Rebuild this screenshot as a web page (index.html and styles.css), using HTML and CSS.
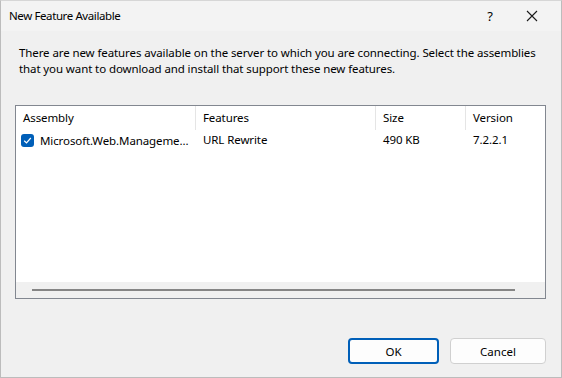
FILE: index.html
```html
<!DOCTYPE html>
<html>
<head>
    <link rel="stylesheet" href="styles.css">
</head>
<body>
    <div class="window">
        <div class="titlebar">
            <span class="title">New Feature Available</span>
            <span class="help">?</span>
            <span class="close">
                <svg width="12" height="12" viewBox="0 0 12 12"><path d="M1 1 L11 11 M11 1 L1 11" stroke="#1a1a1a" stroke-width="1.1" fill="none"/></svg>
            </span>
        </div>

        <div class="content">
            <p class="intro">There are new features available on the server to which you are connecting. Select the assemblies that you want to download and install that support these new features.</p>

            <div class="listbox">
                <div class="list-header">
                    <div class="col">Assembly</div>
                    <div class="col">Features</div>
                    <div class="col">Size</div>
                    <div class="col last">Version</div>
                </div>
                <div class="list-row">
                    <div class="cell first">
                        <span class="check">
                            <svg width="9" height="9" viewBox="0 0 9 9"><path d="M1.2 4.8 L3.5 7 L7.8 2" stroke="#fff" stroke-width="1.2" fill="none"/></svg>
                        </span>
                        Microsoft.Web.Manageme...
                    </div>
                    <div class="cell">URL Rewrite</div>
                    <div class="cell">490 KB</div>
                    <div class="cell">7.2.2.1</div>
                </div>
                <div class="list-fill"></div>
                <div class="hscroll"><div class="thumb"></div></div>
            </div>

            <div class="buttons">
                <button class="btn ok">OK</button>
                <button class="btn cancel">Cancel</button>
            </div>
        </div>
    </div>
</body>
</html>
```

FILE: styles.css
```css
html, body {
    margin: 0;
    padding: 0;
}
body {
    font-family: "Noto Sans", "Open Sans", sans-serif;
    font-size: 11.5px;
    letter-spacing: -0.1px;
    color: #000;
    background: #f0f0f0;
}
.window {
    width: 562px;
    height: 378px;
    box-sizing: border-box;
    border: 1px solid #bcbcbc;
    border-top-color: #d6d6d6;
    background: #f0f0f0;
    display: flex;
    flex-direction: column;
}
.titlebar {
    height: 30px;
    background: #f3f3f3;
    display: flex;
    align-items: center;
    flex-shrink: 0;
}
.title {
    flex: 1;
    padding-left: 8px;
    padding-bottom: 1px;
    letter-spacing: -0.4px;
}
.help {
    width: 20px;
    margin-right: 26px;
    font-size: 13px;
    text-align: center;
}
.close {
    width: 14px;
    margin-right: 21px;
    display: flex;
    align-items: center;
}
.content {
    flex: 1;
    padding: 14px 15px 0 14px;
    display: flex;
    flex-direction: column;
}
.intro {
    margin: 0 0 0 4px;
    line-height: 16px;
    width: 530px;
}
.listbox {
    margin-top: 28px;
    height: 194px;
    box-sizing: border-box;
    border: 1px solid #828790;
    background: #fff;
    display: flex;
    flex-direction: column;
}
.list-header, .list-row {
    display: grid;
    grid-template-columns: 180px 180px 90px 1fr;
}
.list-header {
    height: 24px;
}
.list-header .col {
    padding-left: 7px;
    line-height: 24px;
    border-right: 1px solid #e5e5e5;
}
.list-header .col.last {
    border-right: none;
}
.list-row {
    height: 21px;
    line-height: 20px;
}
.cell {
    padding-left: 7px;
    white-space: nowrap;
}
.cell.first {
    padding-left: 5px;
    display: flex;
    align-items: center;
    gap: 6px;
}
.check {
    width: 13px;
    height: 13px;
    border-radius: 3px;
    background: #005fb8;
    display: flex;
    align-items: center;
    justify-content: center;
    flex-shrink: 0;
}
.list-fill {
    flex: 1;
}
.hscroll {
    height: 16px;
    background: #f0f0f0;
    display: flex;
    align-items: center;
    padding: 0 30px 0 16px;
}
.thumb {
    flex: 1;
    height: 2px;
    background: #858585;
}
.buttons {
    margin-top: 39px;
    display: flex;
    justify-content: flex-end;
    gap: 11px;
}
.btn {
    font-family: inherit;
    font-size: 11.5px;
    height: 26px;
    border-radius: 4px;
    background: #fdfdfd;
    color: #000;
    padding: 0;
}
.ok {
    width: 91px;
    border: 2px solid #005fb8;
}
.cancel {
    width: 96px;
    border: 1px solid #d0d0d0;
}
```
